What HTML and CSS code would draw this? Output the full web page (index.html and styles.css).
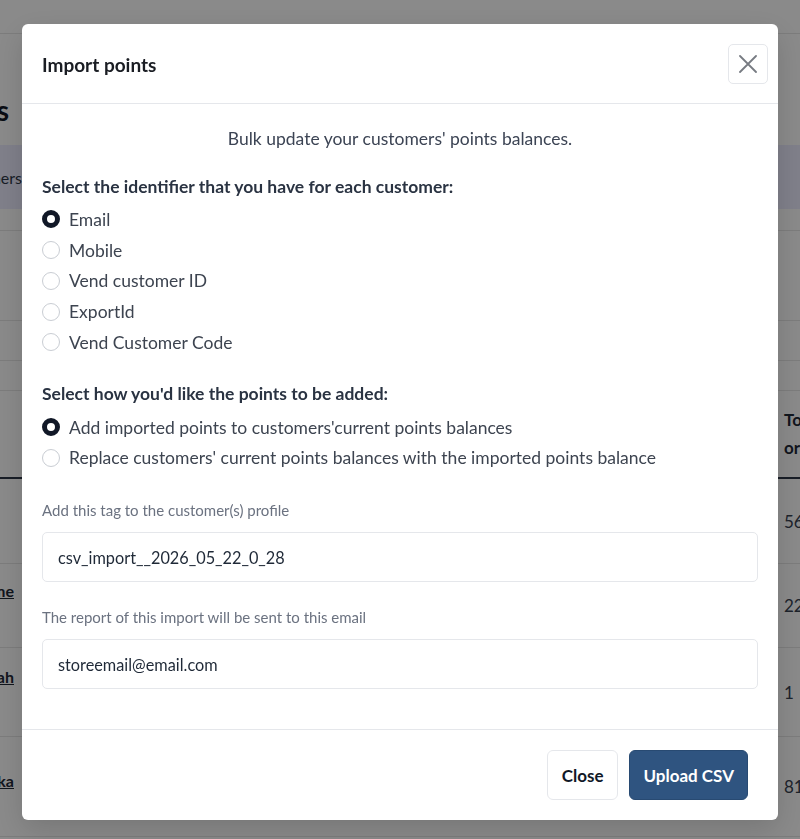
FILE: index.html
```html
<!DOCTYPE html>
<html lang="en">
<head>
  <meta charset="UTF-8" />
  <meta name="viewport" content="width=device-width, initial-scale=1.0"/>
  <title>Import points</title>
  <link rel="stylesheet" href="styles.css">
</head>
<body>
  <!-- Page behind the dialog -->
  <div class="page">
    <div class="topbar"></div>

    <div class="page-head">
      <h1 class="clip clip-title">Customers</h1>
    </div>

    <div class="notice">
      <span class="clip clip-notice">Import or export your customers</span>
    </div>

    <div class="band band-gap"></div>
    <div class="band band-filters"></div>
    <div class="band band-search"></div>
    <div class="band band-tabs"></div>

    <div class="table">
      <div class="row row-head">
        <div class="cell"></div>
        <div class="cell"></div>
        <div class="cell cell-last">Total orders</div>
      </div>
      <div class="row" style="height: 85px;">
        <div class="cell cell-name"><a class="clip clip-name" href="#"></a></div>
        <div class="cell"></div>
        <div class="cell cell-last">560</div>
      </div>
      <div class="row" style="height: 84px;">
        <div class="cell cell-name cell-name-high"><a class="clip clip-name" href="#">Jerome</a></div>
        <div class="cell"></div>
        <div class="cell cell-last">220</div>
      </div>
      <div class="row" style="height: 89px;">
        <div class="cell cell-name"><a class="clip clip-name" href="#">Sarah</a></div>
        <div class="cell"></div>
        <div class="cell cell-last">1</div>
      </div>
      <div class="row" style="height: 100px;">
        <div class="cell cell-name cell-name-low"><a class="clip clip-name" href="#">Erika</a></div>
        <div class="cell"></div>
        <div class="cell cell-last">812</div>
      </div>
    </div>
  </div>

  <!-- Import points dialog -->
  <div class="overlay">
    <div class="modal">
      <div class="modal-header">
        <h2 class="modal-title">Import points</h2>
        <button class="close-btn" type="button" aria-label="Close">
          <svg width="18" height="18" viewBox="0 0 18 18">
            <path d="M1 1 L17 17 M17 1 L1 17" stroke="#777b82" stroke-width="1.8" stroke-linecap="round" fill="none"/>
          </svg>
        </button>
      </div>

      <div class="modal-body">
        <p class="intro">Bulk update your customers' points balances.</p>

        <h3 class="group-title">Select the identifier that you have for each customer:</h3>
        <div class="radio-group">
          <label class="radio-row"><input class="radio" type="radio" name="identifier" checked> Email</label>
          <label class="radio-row"><input class="radio" type="radio" name="identifier"> Mobile</label>
          <label class="radio-row"><input class="radio" type="radio" name="identifier"> Vend customer ID</label>
          <label class="radio-row"><input class="radio" type="radio" name="identifier"> ExportId</label>
          <label class="radio-row"><input class="radio" type="radio" name="identifier"> Vend Customer Code</label>
        </div>

        <h3 class="group-title group-title-spaced">Select how you'd like the points to be added:</h3>
        <div class="radio-group">
          <label class="radio-row"><input class="radio" type="radio" name="mode" checked> Add imported points to customers'current points balances</label>
          <label class="radio-row"><input class="radio" type="radio" name="mode"> Replace customers' current points balances with the imported points balance</label>
        </div>

        <div class="field">
          <label class="field-label" for="tag">Add this tag to the customer(s) profile</label>
          <input class="text-input" id="tag" type="text" value="csv_import__2026_05_22_0_28">
        </div>

        <div class="field">
          <label class="field-label" for="reportEmail">The report of this import will be sent to this email</label>
          <input class="text-input" id="reportEmail" type="text" value="storeemail@email.com">
        </div>
      </div>

      <div class="modal-footer">
        <button class="btn btn-light" type="button">Close</button>
        <button class="btn btn-primary" type="button">Upload CSV</button>
      </div>
    </div>
  </div>
</body>
</html>
```

FILE: styles.css
```css
/* Basic Reset */
* { margin: 0; padding: 0; box-sizing: border-box; }

body {
  font-family: Lato, 'Open Sans', sans-serif;
  color: #1f2937;
  background: white;
  overflow: hidden;
}

/* Page behind the dialog */
.page { width: 100%; }

.topbar {
  height: 34px;
  border-bottom: 1px solid #e6e6e6;
}

.page-head { padding: 59px 0 18px; }

/* keeps only the tail end of a text visible */
.clip {
  display: block;
  direction: rtl;
  overflow: hidden;
  white-space: nowrap;
}

.clip-title {
  width: 9px;
  font-size: 28px;
  line-height: 34px;
  font-weight: 700;
  color: #111827;
}

.notice {
  height: 64px;
  background: #ececff;
  display: flex;
  align-items: center;
}

.clip-notice {
  width: 22px;
  font-size: 16px;
  color: #2d3748;
}

.band { border-bottom: 1px solid #e6e6e6; }
.band-gap { height: 22px; }
.band-filters { height: 90px; }
.band-search { height: 40px; }
.band-tabs { height: 30px; }

/* Customer table */
.row {
  display: grid;
  grid-template-columns: 22px 754px 1fr;
  border-bottom: 1px solid #e6e6e6;
}

.row-head {
  height: 88px;
  border-bottom: 2px solid #2d3748;
}

.cell {
  display: flex;
  align-items: center;
  overflow: hidden;
}

.cell-last {
  padding-left: 8px;
  font-size: 17px;
  color: #374151;
  white-space: nowrap;
}

.row-head .cell-last {
  white-space: normal;
  font-weight: 700;
  line-height: 28px;
  color: #1f2937;
}

.cell-name { align-items: flex-start; padding-top: 19px; }
.cell-name-high { padding-top: 17px; }
.cell-name-low { padding-top: 34px; }

.clip-name {
  width: 14px;
  font-size: 16px;
  font-weight: 700;
  color: #1f2937;
  text-decoration: underline;
}

/* Dialog */
.overlay {
  position: fixed;
  inset: 0;
  background: rgba(0, 0, 0, 0.46);
  padding: 24px 22px;
}

.modal {
  background: white;
  border-radius: 6px;
  box-shadow: 0 10px 30px rgba(0, 0, 0, 0.15);
}

.modal-header {
  display: flex;
  align-items: center;
  justify-content: space-between;
  padding: 20px 10px 19px 20px;
  border-bottom: 1px solid #e5e7eb;
}

.modal-title {
  font-size: 19px;
  font-weight: 700;
  color: #1a1d23;
}

.close-btn {
  width: 40px;
  height: 40px;
  border: 1px solid #e5e7eb;
  border-radius: 5px;
  background: white;
  display: flex;
  align-items: center;
  justify-content: center;
  cursor: pointer;
}

.modal-body { padding: 23px 20px 40px; }

.intro {
  text-align: center;
  font-size: 17.5px;
  line-height: 24px;
  color: #3c4454;
}

.group-title {
  margin-top: 24px;
  margin-bottom: 5px;
  font-size: 17.5px;
  line-height: 24px;
  font-weight: 700;
  color: #2a3342;
}

.group-title-spaced { margin-top: 24px; margin-bottom: 6px; }

.radio-row {
  display: flex;
  align-items: center;
  height: 30.75px;
  font-size: 17.5px;
  color: #3d4450;
  cursor: pointer;
}

.radio {
  appearance: none;
  width: 18px;
  height: 18px;
  margin-right: 9px;
  border: 1px solid #c9cdd3;
  border-radius: 50%;
  background: white;
  flex-shrink: 0;
}

.radio:checked { border: 5px solid #111827; }

.field { margin-top: 27px; }
.field + .field { margin-top: 25px; }

.field-label {
  display: block;
  margin-bottom: 12px;
  font-size: 15px;
  line-height: 20px;
  color: #6b7280;
}

.text-input {
  width: 100%;
  height: 50px;
  padding: 0 15px;
  border: 1px solid #e5e7eb;
  border-radius: 5px;
  font-family: inherit;
  font-size: 16.3px;
  color: #1f2937;
  background: white;
}

.text-input:focus { outline: none; border-color: #2f5480; }

.modal-footer {
  display: flex;
  justify-content: flex-end;
  gap: 11px;
  padding: 20px 30px 20px;
  border-top: 1px solid #e5e7eb;
}

/* Buttons */
.btn {
  height: 50px;
  padding: 0 15px;
  border-radius: 6px;
  font-family: inherit;
  font-size: 17px;
  font-weight: 700;
  cursor: pointer;
}

.btn-light {
  padding: 0 14px;
  background: white;
  border: 1px solid #e5e7eb;
  color: #111827;
}

.btn-primary {
  padding: 0 13px;
  background: #2f5480;
  border: 1px solid #284a72;
  color: white;
}
```
